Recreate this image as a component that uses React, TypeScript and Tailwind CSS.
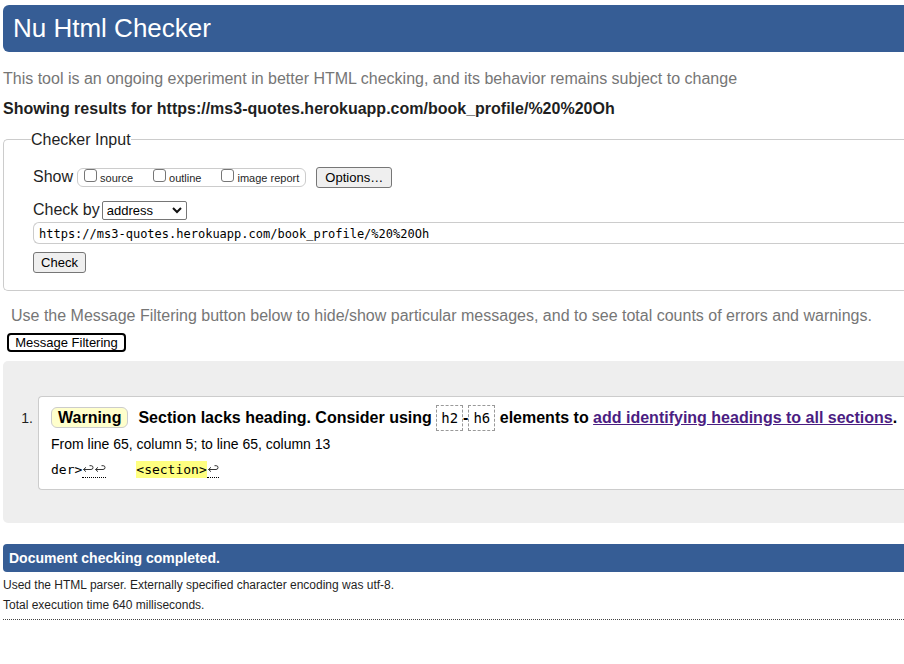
import React from "react";

const options = ["source", "outline", "image report"];

function Return() {
  return (
    <svg className="block h-3 w-3" viewBox="0 0 12 12" fill="none" stroke="#333" strokeWidth="1">
      <path d="M1.5 6.5h7.5a2 2 0 0 0 2-2a1.8 1.8 0 0 0-1.8-1.8H7.5M4 4.3L1.5 6.5l2.5 2.2" />
    </svg>
  );
}

function Returns({ count }: { count: number }) {
  return (
    <span className="flex h-[18px] items-center border-b border-dotted border-black">
      {Array.from({ length: count }, (_, i) => (
        <Return key={i} />
      ))}
    </span>
  );
}

function Code({ children }: { children: React.ReactNode }) {
  return (
    <code className="inline-block h-[26px] border border-dashed border-[#999] px-1 font-['DejaVu_Sans_Mono',monospace] text-sm leading-6 font-normal">
      {children}
    </code>
  );
}

export default function App() {
  return (
    <div className="overflow-hidden bg-white pt-[5px] pl-[3px] font-['Liberation_Sans',Arial,sans-serif] text-base leading-5 text-[#1f1f1f]">
      <header className="rounded-l-md bg-[#365d95] px-[10px] text-white">
        <h1 className="text-[26px] leading-[47px]">Nu Html Checker</h1>
      </header>
      <p className="mt-[17px] text-[#767676]">
        This tool is an ongoing experiment in better HTML checking, and its behavior remains subject to change
      </p>
      <h2 className="mt-[10px] font-bold">
        Showing results for https://ms3-quotes.herokuapp.com/book_profile/%20%20Oh
      </h2>

      <form className="mt-[9px]" onSubmit={(e) => e.preventDefault()}>
        <fieldset className="rounded-l-[5px] border border-r-0 border-[#ccc] pt-4 pb-[17px] pl-[29px]">
          <legend className="-ml-[2px] pt-[2px]">Checker Input</legend>
          <div className="flex h-[22px] items-center">
            <span>Show</span>
            <div className="ml-1 flex h-[19px] items-center gap-5 rounded-md border border-[#ccc] px-[6px] text-[11px]">
              {options.map((name) => (
                <label key={name} className="flex items-center gap-[3px] leading-4">
                  <input
                    type="checkbox"
                    className="mb-1 h-[13px] w-[13px] appearance-none rounded-[3px] border border-[#767676] bg-white"
                  />
                  <span className="pt-px">{name}</span>
                </label>
              ))}
            </div>
            <button type="button" className="ml-[10px] h-[21px] w-[76px] rounded-[3px] border border-[#767676] bg-[#efefef] pt-px text-[13px] leading-[18px] text-black">
              Options…
            </button>
          </div>
          <div className="mt-3 flex h-5 items-center">
            <label htmlFor="method">Check by</label>
            <div className="ml-[2px] grid items-center">
              <select
                id="method"
                className="col-start-1 row-start-1 h-[19px] w-[85px] appearance-none rounded-[2px] border border-[#767676] bg-white pt-px pl-1 text-[13px] leading-4 text-black"
              >
                <option>address</option>
                <option>file upload</option>
                <option>text input</option>
              </select>
              <svg className="pointer-events-none col-start-1 row-start-1 mr-1 h-3 w-3 justify-self-end" viewBox="0 0 12 12" fill="none" stroke="#111" strokeWidth="2">
                <path d="M2 4l4 4 4-4" />
              </svg>
            </div>
          </div>
          <input
            aria-label="Address"
            defaultValue="https://ms3-quotes.herokuapp.com/book_profile/%20%20Oh"
            className="mt-[2px] block h-[22px] w-full rounded-l-md border border-r-0 border-[#ccc] pt-[2px] pl-[5px] font-['DejaVu_Sans_Mono',monospace] text-xs text-black"
          />
          <button type="submit" className="mt-2 block h-[21px] w-[53px] rounded-[3px] border border-[#767676] bg-[#efefef] text-[13px] leading-4 text-black">
            Check
          </button>
        </fieldset>
      </form>

      <p className="mt-[15px] pl-2 text-[#767676]">
        Use the Message Filtering button below to hide/show particular messages, and to see total counts of errors and warnings.
      </p>
      <button type="button" className="mt-[7px] ml-1 block h-[19px] w-[119px] rounded-[4px] border-2 border-black bg-white text-[13px] leading-[15px] text-black">
        Message Filtering
      </button>

      <ol className="mt-[9px] rounded-l-[5px] bg-[#eee] pt-[35px] pb-[33px] text-black">
        <li className="flex">
          <span className="mt-3 w-[35px] pr-[5px] text-right text-sm leading-5 text-[#1f1f1f]">1.</span>
          <div className="min-w-0 flex-1 rounded-l-[4px] border border-r-0 border-[#ccc] bg-white pt-2 pb-[11px] pl-3">
            <p className="flex h-[26px] items-center font-bold whitespace-pre">
              <strong className="mr-[10px] mb-px h-[21px] rounded-md border border-[#ccc] bg-[#ffffcc] px-[6px] leading-[19px]">Warning</strong>
              <span>
                Section lacks heading. Consider using <Code>h2</Code>-<Code>h6</Code> elements to{" "}
                <a href="#sections" className="text-[#4b1d82] underline">add identifying headings to all sections</a>.
              </span>
            </p>
            <p className="mt-[3px] text-sm leading-5">From line 65, column 5; to line 65, column 13</p>
            <p className="mt-[6px] flex h-[18px] items-center font-['DejaVu_Sans_Mono',monospace] text-[13px] leading-[17px]">
              <span>der&gt;</span>
              <Returns count={2} />
              <mark className="ml-[30px] bg-[#ffff80] text-black">&lt;section&gt;</mark>
              <Returns count={1} />
            </p>
          </div>
        </li>
      </ol>

      <p className="mt-[21px] rounded-l-[4px] bg-[#365d95] px-[6px] text-sm leading-7 font-bold text-white">
        Document checking completed.
      </p>
      <div className="border-b border-dotted border-[#444] pt-[3px] pb-1 text-xs leading-5">
        <p>Used the HTML parser. Externally specified character encoding was utf-8.</p>
        <p>Total execution time 640 milliseconds.</p>
      </div>
    </div>
  );
}
